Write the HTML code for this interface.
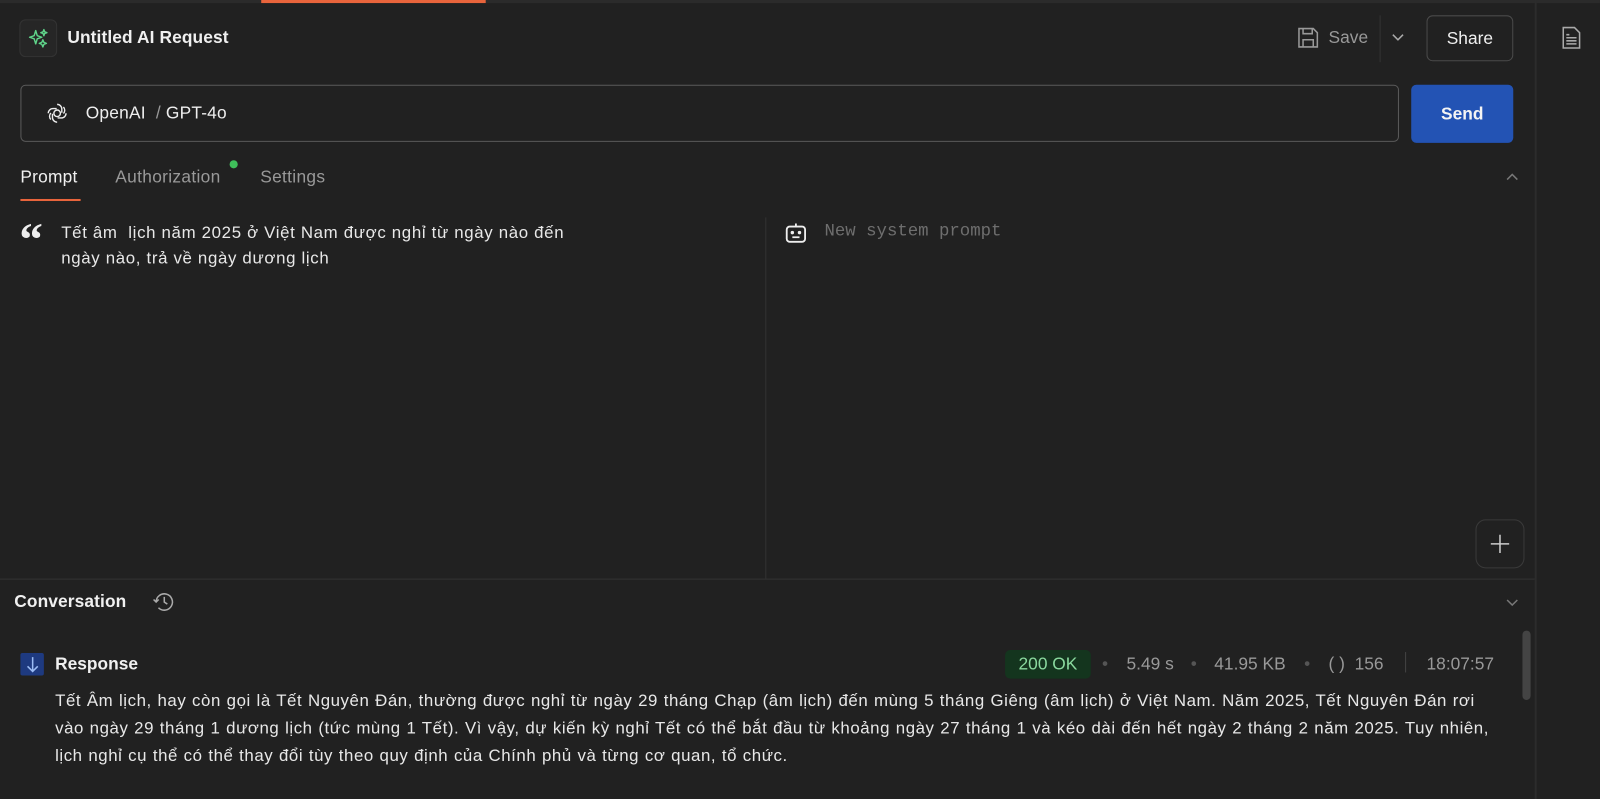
<!DOCTYPE html>
<html><head><meta charset="utf-8"><style>
*{box-sizing:border-box;margin:0;padding:0}
body{width:1600px;height:783px;background:#212121;font-family:"Liberation Sans",sans-serif;color:#e8e8e8;position:relative;overflow:hidden}
#w{position:absolute;left:0;top:0;width:1568px;height:767px;transform:scale(1.0204);transform-origin:0 0}
.a{position:absolute;white-space:nowrap}
</style></head><body><div id="w">
<div class="a" style="left:0;top:0;width:1568px;height:3px;background:#2b2b2b"></div>
<div class="a" style="left:256px;top:0;width:220px;height:3px;background:#e8643c"></div>
<div class="a" style="left:1504px;top:0;width:2px;height:783px;background:#2c2c2c"></div>
<!-- title -->
<div class="a" style="left:19px;top:19px;width:37px;height:37px;border:1px solid #333;border-radius:6px;background:#262626"></div>
<svg class="a" style="left:26px;top:26px" width="24" height="24" viewBox="0 0 24 24" fill="none" stroke="#5fd48a" stroke-width="1.4" stroke-linejoin="round"><path d="M9 4 L10.5 9 L15 10.5 L10.5 12 L9 17 L7.5 12 L3 10.5 L7.5 9Z"/><path d="M17 3 L17.8 5.2 L20 6 L17.8 6.8 L17 9 L16.2 6.8 L14 6 L16.2 5.2Z"/><path d="M16 13 L17 15.5 L19.5 16.5 L17 17.5 L16 20 L15 17.5 L12.5 16.5 L15 15.5Z"/></svg>
<div class="a" style="left:66px;top:27px;font-size:17px;font-weight:bold;color:#f0f0f0;letter-spacing:.1px">Untitled AI Request</div>
<svg class="a" style="left:1271px;top:26px" width="22" height="22" viewBox="0 0 22 22" fill="none" stroke="#999" stroke-width="1.5"><path d="M2 2h14l4 4v14H2z"/><path d="M6 2v5h9V2"/><path d="M6 20v-7h10v7"/></svg>
<div class="a" style="left:1302px;top:27px;font-size:17px;color:#999">Save</div>
<div class="a" style="left:1352px;top:15px;width:1px;height:46px;background:#333"></div>
<svg class="a" style="left:1362px;top:31px" width="16" height="12" viewBox="0 0 16 12" fill="none" stroke="#aaa" stroke-width="1.5"><path d="M3 3l5 5 5-5"/></svg>
<div class="a" style="left:1398px;top:15px;width:85px;height:45px;border:1px solid #4a4a4a;border-radius:6px;font-size:17px;color:#f0f0f0;text-align:center;line-height:43px">Share</div>
<svg class="a" style="left:1530px;top:25px" width="20" height="24" viewBox="0 0 20 24" fill="none" stroke="#aaa" stroke-width="1.5"><path d="M2 2h11l5 5v15H2z"/><path d="M5 9h3M5 12h10M5 15h10M5 18h10"/></svg>
<!-- model -->
<div class="a" style="left:20px;top:83px;width:1351px;height:56px;border:1.5px solid #5a5a5a;border-radius:5px"></div>
<svg class="a" style="left:45px;top:100px" width="22" height="22" viewBox="0 0 24 24" fill="none" stroke="#eee" stroke-width="1.5"><circle cx="12" cy="12" r="3.5"/><path d="M12 2.5a5 5 0 0 1 5 5v4M21.5 12a5 5 0 0 1-5 5h-4M12 21.5a5 5 0 0 1-5-5v-4M2.5 12a5 5 0 0 1 5-5h4M18.7 5.3a5 5 0 0 1 0 7M5.3 18.7a5 5 0 0 1 0-7"/></svg>
<div class="a" style="left:84px;top:101px;font-size:17px;color:#eee;letter-spacing:.2px">OpenAI <span style="color:#999">&nbsp;/&nbsp;</span>GPT-4o</div>
<div class="a" style="left:1383px;top:83px;width:100px;height:57px;background:#2353b4;border-radius:5px;font-size:17px;font-weight:bold;color:#f4f4f4;text-align:center;line-height:57px">Send</div>
<!-- tabs -->
<div class="a" style="left:20px;top:164px;font-size:17px;color:#f0f0f0;letter-spacing:.2px">Prompt</div>
<div class="a" style="left:20px;top:195px;width:59px;height:2px;background:#e8643c"></div>
<div class="a" style="left:113px;top:164px;font-size:17px;color:#999;letter-spacing:.3px">Authorization</div>
<div class="a" style="left:225px;top:157px;width:8px;height:8px;border-radius:50%;background:#3fbf5a"></div>
<div class="a" style="left:255px;top:164px;font-size:17px;color:#999;letter-spacing:.3px">Settings</div>
<svg class="a" style="left:1474px;top:167px" width="16" height="12" viewBox="0 0 16 12" fill="none" stroke="#777" stroke-width="1.5"><path d="M3 9l5-5 5 5"/></svg>
<!-- prompt -->
<div class="a" style="left:19px;top:212px;font-size:46px;font-weight:bold;color:#eee;font-family:'Liberation Serif',serif;line-height:46px">&ldquo;</div>
<div class="a" style="left:60px;top:216px;font-size:16.5px;letter-spacing:.65px;line-height:25px;color:#e8e8e8">Tết âm&nbsp; lịch năm 2025 ở Việt Nam được nghỉ từ ngày nào đến<br>ngày nào, trả về ngày dương lịch</div>
<div class="a" style="left:750px;top:213px;width:1px;height:354px;background:#333"></div>
<svg class="a" style="left:769px;top:218px" width="22" height="22" viewBox="0 0 22 22" fill="none" stroke="#eee" stroke-width="1.8"><rect x="2" y="4" width="18" height="15" rx="3"/><path d="M11 1v3"/><circle cx="7.5" cy="10" r=".8" fill="#eee"/><circle cx="14.5" cy="10" r=".8" fill="#eee"/><path d="M7.5 14.5h7"/></svg>
<div class="a" style="left:808px;top:218px;font-size:17px;color:#6e6e6e;font-family:'Liberation Mono',monospace">New system prompt</div>
<div class="a" style="left:1446px;top:509px;width:48px;height:48px;border:1px solid #3a3a3a;border-radius:10px"></div>
<svg class="a" style="left:1460px;top:523px" width="20" height="20" viewBox="0 0 20 20" stroke="#ccc" stroke-width="1.5"><path d="M10 1v18M1 10h18"/></svg>
<!-- conversation -->
<div class="a" style="left:0;top:567px;width:1504px;height:1px;background:#333"></div>
<div class="a" style="left:14px;top:580px;font-size:17px;font-weight:bold;color:#f0f0f0;letter-spacing:.1px">Conversation</div>
<svg class="a" style="left:149px;top:579px" width="24" height="22" viewBox="0 0 24 22" fill="none" stroke="#aaa" stroke-width="1.5"><path d="M4 11a8 8 0 1 1 2.3 5.6"/><path d="M1.5 8.5L4 11l2.5-2.5"/><path d="M12 6v5l3 2"/></svg>
<svg class="a" style="left:1474px;top:585px" width="16" height="12" viewBox="0 0 16 12" fill="none" stroke="#777" stroke-width="1.5"><path d="M3 3l5 5 5-5"/></svg>
<div class="a" style="left:20px;top:640px;width:23px;height:22px;background:#1e3a80;border-radius:2px"></div>
<svg class="a" style="left:24px;top:642px" width="16" height="18" viewBox="0 0 16 18" fill="none" stroke="#9bbcf5" stroke-width="1.5"><path d="M8 2v14M3 11l5 5 5-5"/></svg>
<div class="a" style="left:54px;top:641px;font-size:17px;font-weight:bold;color:#f0f0f0">Response</div>
<div class="a" style="left:985px;top:637px;width:84px;height:28px;background:#14351e;border-radius:5px;font-size:17px;color:#8ad99e;text-align:center;line-height:28px">200 OK</div>
<div class="a" style="left:1080px;top:641px;font-size:17px;color:#555">•</div>
<div class="a" style="left:1104px;top:641px;font-size:17px;color:#999">5.49 s</div>
<div class="a" style="left:1167px;top:641px;font-size:17px;color:#555">•</div>
<div class="a" style="left:1190px;top:641px;font-size:17px;color:#999">41.95 KB</div>
<div class="a" style="left:1278px;top:641px;font-size:17px;color:#555">•</div>
<div class="a" style="left:1302px;top:641px;font-size:17px;color:#999">( )&nbsp; 156</div>
<div class="a" style="left:1377px;top:639px;width:1px;height:20px;background:#444"></div>
<div class="a" style="left:1398px;top:641px;font-size:17px;color:#999">18:07:57</div>
<div class="a" style="left:1492px;top:618px;width:8px;height:68px;background:#444;border-radius:4px"></div>
<div class="a" style="left:54px;top:674px;font-size:16.5px;letter-spacing:.55px;word-spacing:.5px;line-height:27px;color:#e8e8e8">Tết Âm lịch, hay còn gọi là Tết Nguyên Đán, thường được nghỉ từ ngày 29 tháng Chạp (âm lịch) đến mùng 5 tháng Giêng (âm lịch) ở Việt Nam. Năm 2025, Tết Nguyên Đán rơi<br>vào ngày 29 tháng 1 dương lịch (tức mùng 1 Tết). Vì vậy, dự kiến kỳ nghỉ Tết có thể bắt đầu từ khoảng ngày 27 tháng 1 và kéo dài đến hết ngày 2 tháng 2 năm 2025. Tuy nhiên,<br>lịch nghỉ cụ thể có thể thay đổi tùy theo quy định của Chính phủ và từng cơ quan, tổ chức.</div>
</div></body></html>
